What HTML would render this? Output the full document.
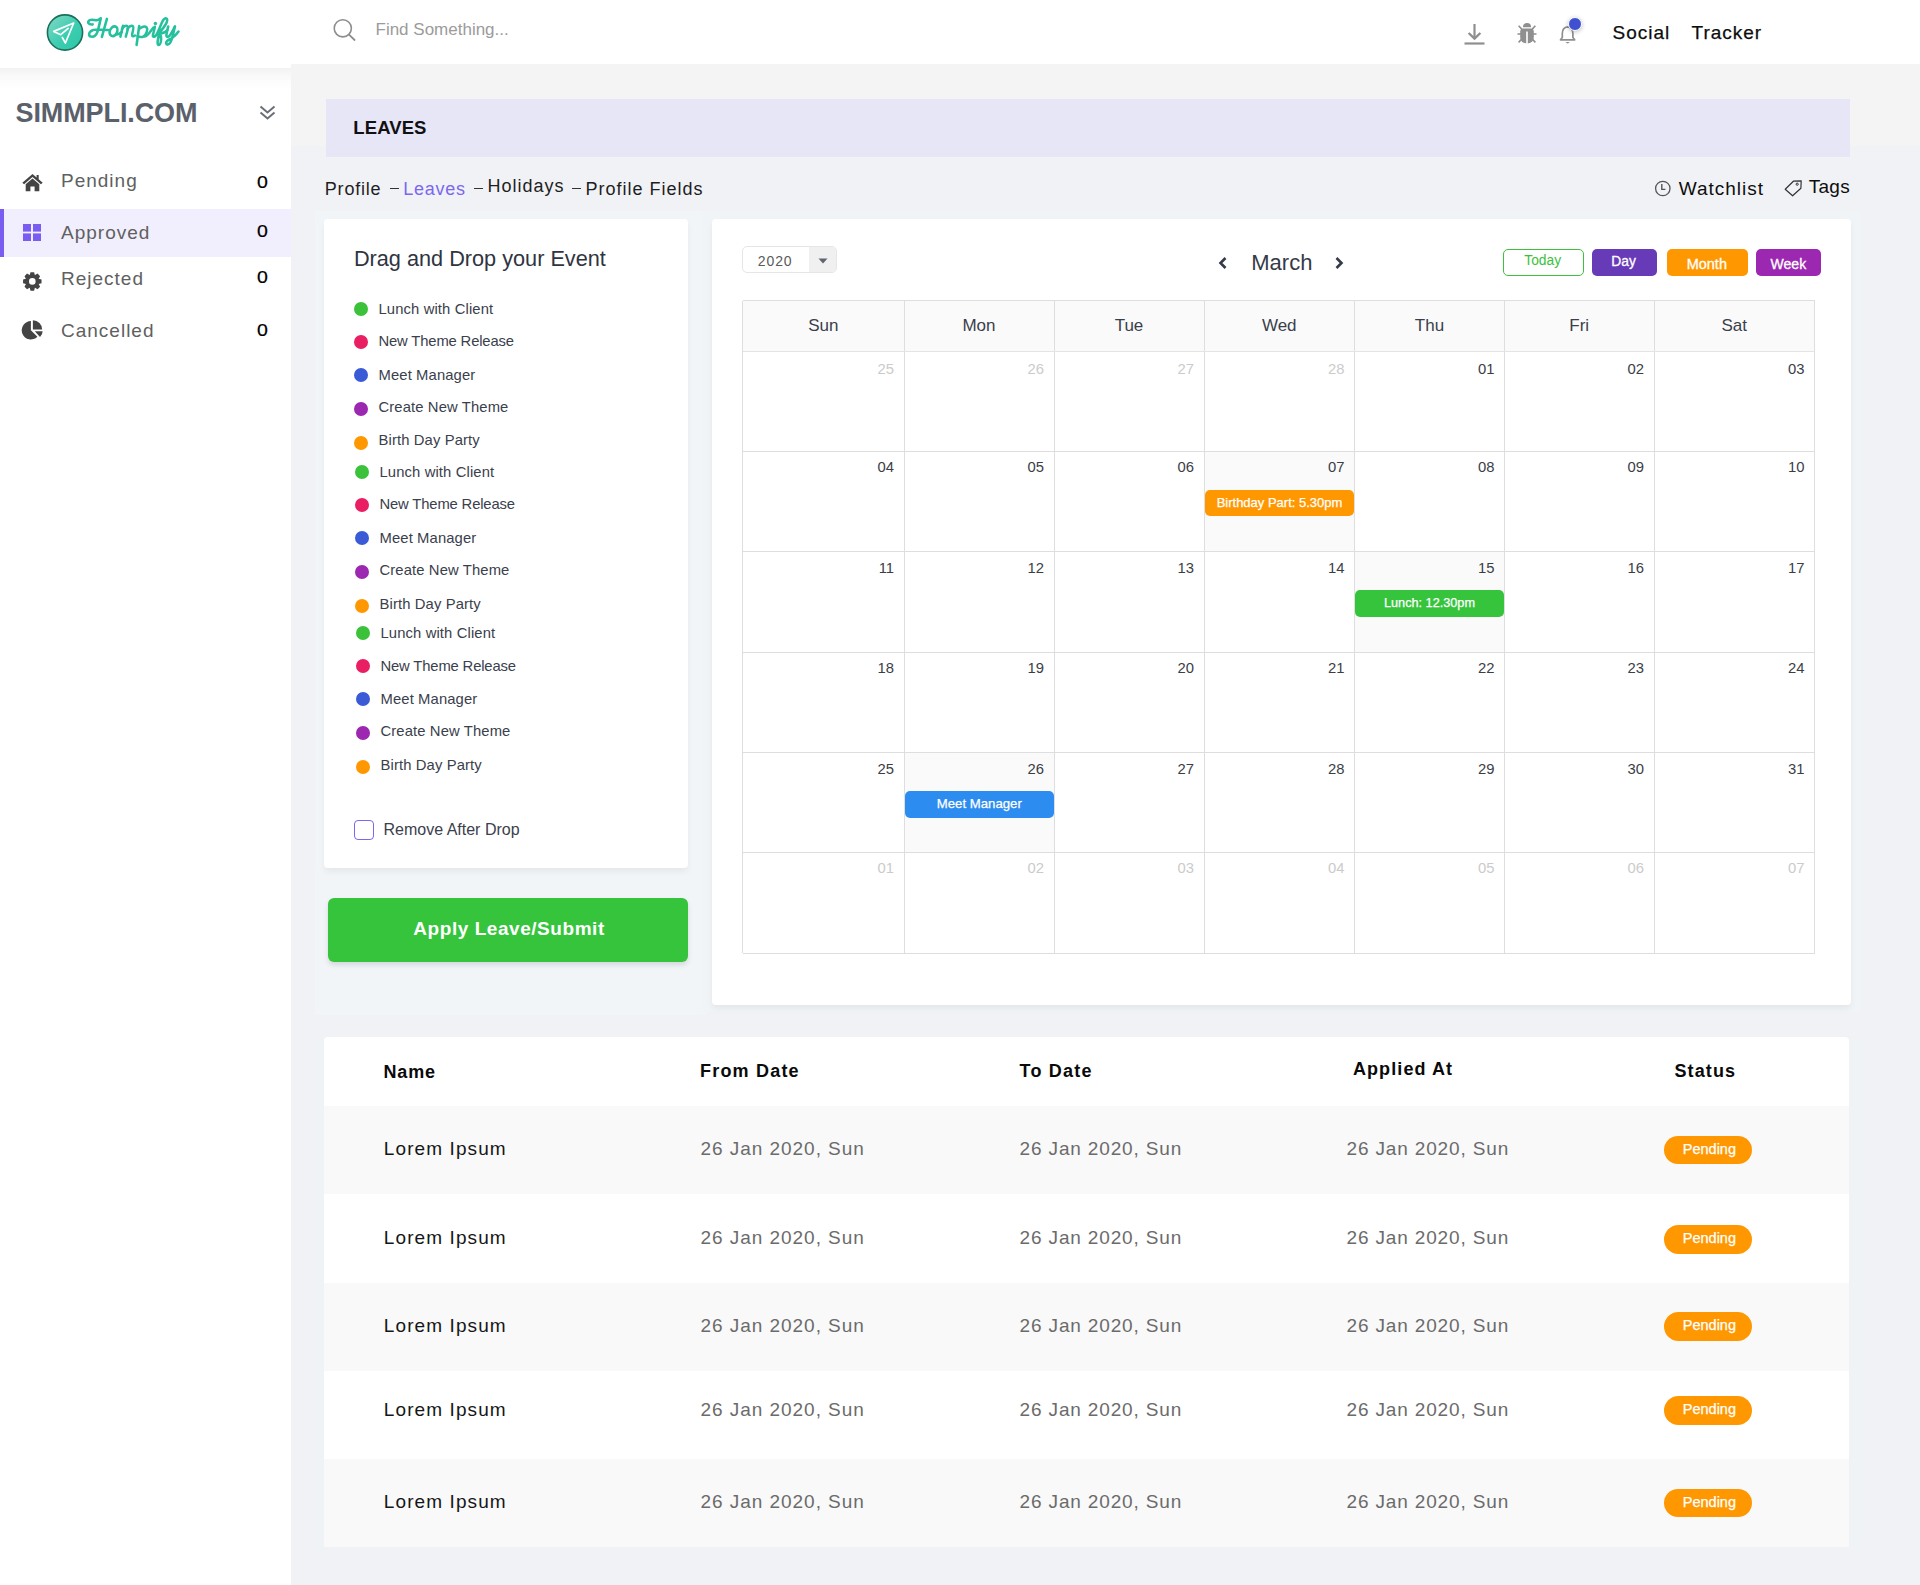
<!DOCTYPE html>
<html><head><meta charset="utf-8"><title>Leaves</title>
<style>
html,body{margin:0;padding:0;}
body{width:1920px;height:1585px;position:relative;overflow:hidden;background:#fff;font-family:"Liberation Sans", sans-serif;}
.t{position:absolute;white-space:nowrap;}
.r{position:absolute;}
</style></head><body>
<div class="r" style="left:291px;top:64px;width:1629px;height:82px;background:#f4f4f4;"></div>
<div class="r" style="left:291px;top:146px;width:1629px;height:1439px;background:#f1f2f6;"></div>
<div class="r" style="left:0px;top:0px;width:1920px;height:64px;background:#ffffff;"></div>
<div class="r" style="left:0px;top:64px;width:291px;height:1521px;background:#ffffff;"></div>
<div class="r" style="left:0px;top:68px;width:291px;height:22px;background:linear-gradient(#f2f2f2,#fafafa 40%,#ffffff);"></div>
<svg class="r" style="left:46px;top:13px" width="38" height="39" viewBox="0 0 38 39">
<defs><linearGradient id="lg" x1="0" y1="0" x2="1" y2="1"><stop offset="0" stop-color="#86d8c6"/><stop offset="0.55" stop-color="#3ccdb0"/><stop offset="1" stop-color="#2cc6a6"/></linearGradient></defs>
<circle cx="19" cy="19.5" r="17.6" fill="url(#lg)" stroke="#1b6f5a" stroke-width="1.6"/>
<path d="M16.3 24.5 L19.4 30 L27.7 10 L7.7 18.4 L14.7 21.7 L22.2 15.3" fill="none" stroke="#fff" stroke-width="1.7" stroke-linejoin="round" stroke-linecap="round"/>
</svg>
<svg class="r" style="left:84px;top:14px" width="100" height="38" viewBox="0 0 100 38">
<g fill="none" stroke="#25c09d" stroke-width="2.55" stroke-linecap="round" stroke-linejoin="round">
<path d="M8.6 10.4 C4.5 10.8 2.8 8.2 5.5 6.3 C8 4.6 11 6.6 13 6.2 C14.5 5.9 15.8 5 16.7 4.4"/>
<path d="M16.7 4.4 C15.5 10 14.5 15 13.2 18.5 C12 21.5 9.5 23 7 22.6 C4.5 22 4.6 19 6.8 17.3 C9 15.6 12 15.5 15 15.6 C18 15.7 21 16 24 16.1"/>
<path d="M22.9 4.9 L17.9 22.9"/>
<path d="M32.6 13.2 C29.5 10.8 25.6 14.5 25.6 18.6 C25.6 22 29 23.2 31.3 21 C33.4 19 34.4 15 32.6 13.2 Z"/>
<path d="M32.3 20.3 C34 20.6 36 19.6 37.8 18"/>
<path d="M39 11.7 L36.4 22.6"/>
<path d="M38 15 C39.5 12.5 42 11 43.4 12.2 C44.4 13 44 15 41.8 22.6"/>
<path d="M43.5 15 C45 12.5 47.5 11 48.9 12.2 C49.9 13 49.5 15 48.2 20 C47.7 22 48.8 23 51 21.5"/>
<path d="M55.2 12 L52.6 31"/>
<path d="M55.2 15 C57.5 12.5 61 11.8 62.6 13.4 C64 15 62.6 20.5 59.6 22.3 C57.5 23.4 55 23 53.5 22.2"/>
<path d="M60.5 22.5 C63.5 22.5 66.5 17 69.4 13.5"/>
<path d="M70.9 12.8 L68.9 21.2 C68.6 22.8 69.7 23.2 70.9 22.4 C71.6 21.9 72.2 21.2 72.6 20.6"/>
<path d="M72.6 20.6 C75 16 77 10 79 6.4 C80 4.6 81.5 3.8 82.5 4.6 C83.6 5.5 83.1 8 81.6 10.5 C80.1 13 78.2 15.5 76.2 17.6 C75.1 19.4 74.3 23 73.8 26.5 C73.4 29 73.6 31.1 74.7 31 C75.9 30.9 76.9 28.5 77.1 25.5 C77.2 23.5 76.7 21.2 76.3 19.6 C78.8 19.6 81.2 18.6 83.4 16.2"/>
<path d="M84.2 12.6 C83.4 15.5 82.7 18.5 82.4 20.8 C82.2 22.6 83.3 23.3 84.7 22.5 C86.9 21 89 16 90.9 12.6"/>
<path d="M90.9 12.6 C90 16.5 89 21 88 24.5 C87.1 27.5 85.6 30.5 83.6 30.6 C81.9 30.6 81.6 28.5 83.1 27 C84.6 25.5 86.6 24.8 88.1 24 C90.6 22.5 92.8 20 94.5 17.6"/>
</g><circle cx="71.4" cy="9.4" r="1.75" fill="#25c09d"/>
</svg>
<svg class="r" style="left:332px;top:18px" width="25" height="24" viewBox="0 0 25 24">
<circle cx="10.8" cy="10.3" r="8.6" fill="none" stroke="#8d8d8d" stroke-width="1.6"/>
<line x1="17" y1="16.6" x2="22.6" y2="22" stroke="#8d8d8d" stroke-width="1.8" stroke-linecap="round"/>
</svg>
<div class="t" style="left:375.5px;top:20.80px;font-size:17px;line-height:17px;color:#9b9b9b;font-weight:400;letter-spacing:0px;">Find Something...</div>
<svg class="r" style="left:1463px;top:22px" width="23" height="24" viewBox="0 0 23 24">
<path d="M11.5 2 V16" stroke="#8f8f8f" stroke-width="2.2"/>
<path d="M5.6 11 L11.5 16.6 L17.4 11" fill="none" stroke="#8f8f8f" stroke-width="2.4" stroke-linejoin="miter"/>
<path d="M1.5 21.5 H21.5" stroke="#8f8f8f" stroke-width="2.2"/>
</svg>
<svg class="r" style="left:1515px;top:22px" width="24" height="24" viewBox="0 0 24 24">
<path d="M7.9 5.2 A4.1 4.1 0 0 1 16.1 5.2 Z" fill="#8f8f8f"/>
<path d="M5.2 9 Q5.6 6.6 8 6.6 L16 6.6 Q18.4 6.6 18.8 9 L18.8 15.5 Q18.6 20.6 12.8 21.4 L12.8 9.4 L11.2 9.4 L11.2 21.4 Q5.4 20.6 5.2 15.5 Z" fill="#8f8f8f"/>
<path d="M2.5 12 H6 M18 12 H21.5 M3.6 3.8 L7 7.4 M20.4 3.8 L17 7.4 M3.6 20.4 L7 16.8 M20.4 20.4 L17 16.8" stroke="#8f8f8f" stroke-width="1.6"/>
</svg>
<svg class="r" style="left:1557px;top:23px" width="22" height="23" viewBox="0 0 22 23">
<path d="M3.5 16.8 L5.3 14.5 V10.5 Q5.3 4.3 10.6 3.8 Q15.9 4.3 15.9 10.5 V14.5 L17.7 16.8 Z" fill="none" stroke="#8f8f8f" stroke-width="1.7" stroke-linejoin="round"/>
<path d="M8.5 19 Q10.6 21.8 12.7 19 Z" fill="#8f8f8f"/>
</svg>
<div class="r" style="left:1567.5px;top:17px;width:14px;height:14px;border-radius:50%;background:#3f51d0;border:1.6px solid #fff;box-sizing:border-box;box-shadow:0 1px 4px rgba(0,0,0,0.25)"></div>
<div class="t" style="left:1612.5px;top:22.77px;font-size:19px;line-height:19px;color:#0d0d0d;font-weight:400;letter-spacing:1px;-webkit-text-stroke:0.25px #0d0d0d;">Social</div>
<div class="t" style="left:1691.5px;top:22.77px;font-size:19px;line-height:19px;color:#0d0d0d;font-weight:400;letter-spacing:1px;-webkit-text-stroke:0.25px #0d0d0d;">Tracker</div>
<div class="t" style="left:15.5px;top:99.83px;font-size:27px;line-height:27px;color:#5b616a;font-weight:700;letter-spacing:-0.1px;">SIMMPLI.COM</div>
<svg class="r" style="left:258px;top:103px" width="19" height="19" viewBox="0 0 19 19">
<path d="M2.5 3.5 L9.5 9.5 L16.5 3.5 M2.5 9.5 L9.5 15.5 L16.5 9.5" fill="none" stroke="#6a6f77" stroke-width="2"/>
</svg>
<div class="r" style="left:0px;top:209px;width:291px;height:48px;background:#f1effd;"></div>
<div class="r" style="left:0px;top:209px;width:4px;height:48px;background:#7b5cf0;"></div>
<div class="t" style="left:61px;top:170.97px;font-size:19px;line-height:19px;color:#606060;font-weight:400;letter-spacing:1px;">Pending</div>
<div class="t" style="left:257px;top:174.17px;font-size:17.3px;line-height:17.3px;color:#000;font-weight:400;letter-spacing:0px;transform:scaleX(1.13);transform-origin:0 0;-webkit-text-stroke:0.2px #000;">0</div>
<div class="t" style="left:61px;top:222.67px;font-size:19px;line-height:19px;color:#606060;font-weight:400;letter-spacing:1px;">Approved</div>
<div class="t" style="left:257px;top:223.27px;font-size:17.3px;line-height:17.3px;color:#000;font-weight:400;letter-spacing:0px;transform:scaleX(1.13);transform-origin:0 0;-webkit-text-stroke:0.2px #000;">0</div>
<div class="t" style="left:61px;top:268.97px;font-size:19px;line-height:19px;color:#606060;font-weight:400;letter-spacing:1px;">Rejected</div>
<div class="t" style="left:257px;top:268.97px;font-size:17.3px;line-height:17.3px;color:#000;font-weight:400;letter-spacing:0px;transform:scaleX(1.13);transform-origin:0 0;-webkit-text-stroke:0.2px #000;">0</div>
<div class="t" style="left:61px;top:321.37px;font-size:19px;line-height:19px;color:#606060;font-weight:400;letter-spacing:1px;">Cancelled</div>
<div class="t" style="left:257px;top:322.27px;font-size:17.3px;line-height:17.3px;color:#000;font-weight:400;letter-spacing:0px;transform:scaleX(1.13);transform-origin:0 0;-webkit-text-stroke:0.2px #000;">0</div>
<svg class="r" style="left:21px;top:172px" width="23" height="21" viewBox="0 0 23 21">
<path d="M11.5 2 L1.3 10.8 L3.1 12.2 L11.5 5 L19.9 12.2 L21.7 10.8 L17.7 7.3 V3 H15.6 V5.5 Z" fill="#444"/>
<path d="M4.7 12.2 L11.5 6.6 L18.3 12.2 V19.2 H13.6 V14.6 H9.4 V19.2 H4.7 Z" fill="#444"/>
</svg>
<svg class="r" style="left:23px;top:224px" width="18" height="17" viewBox="0 0 18 17">
<rect x="0" y="0" width="8" height="7.6" fill="#7b5cf0"/><rect x="10" y="0" width="8" height="7.6" fill="#7b5cf0"/>
<rect x="0" y="9.4" width="8" height="7.6" fill="#7b5cf0"/><rect x="10" y="9.4" width="8" height="7.6" fill="#7b5cf0"/>
</svg>
<svg class="r" style="left:21px;top:270px" width="23" height="23" viewBox="0 0 23 23">
<path fill="#444" fill-rule="evenodd" d="M8.72 5.00 L9.51 2.17 L13.09 2.17 L13.88 5.00 L14.00 5.05 L16.56 3.61 L19.09 6.14 L17.65 8.70 L17.70 8.82 L20.53 9.61 L20.53 13.19 L17.70 13.98 L17.65 14.10 L19.09 16.66 L16.56 19.19 L14.00 17.75 L13.88 17.80 L13.09 20.63 L9.51 20.63 L8.72 17.80 L8.60 17.75 L6.04 19.19 L3.51 16.66 L4.95 14.10 L4.90 13.98 L2.07 13.19 L2.07 9.61 L4.90 8.82 L4.95 8.70 L3.51 6.14 L6.04 3.61 L8.60 5.05 Z M14.60 11.40 A3.3 3.3 0 1 0 8.00 11.40 A3.3 3.3 0 1 0 14.60 11.40 Z"/>
</svg>
<svg class="r" style="left:21px;top:319px" width="24" height="24" viewBox="0 0 24 24">
<path d="M9.9 11.3 L9.9 2.1000000000000014 A9.2 9.2 0 1 0 16.41 17.81 Z" fill="#444"/><path d="M11.9 10.5 L11.9 1.1999999999999993 A9.3 9.3 0 0 1 21.200000000000003 10.5 Z" fill="#444"/><path d="M13.8 12.2 L21.6 12.2 A7.8 7.8 0 0 1 19.02 18.00 Z" fill="#444"/>
</svg>
<div class="r" style="left:326px;top:99px;width:1524px;height:58px;background:#e7e6f7;"></div>
<div class="t" style="left:353.3px;top:119.13px;font-size:18.5px;line-height:18.5px;color:#111;font-weight:700;letter-spacing:0.1px;">LEAVES</div>
<div class="t" style="left:324.8px;top:179.58px;font-size:18px;line-height:18px;color:#1e1e1e;font-weight:400;letter-spacing:0.8px;">Profile</div>
<div class="r" style="left:390.2px;top:188.0px;width:9px;height:1.2px;background:#333;"></div>
<div class="t" style="left:403.2px;top:179.58px;font-size:18px;line-height:18px;color:#7b68ee;font-weight:400;letter-spacing:0.75px;">Leaves</div>
<div class="r" style="left:473.7px;top:188.0px;width:9px;height:1.2px;background:#333;"></div>
<div class="t" style="left:487.5px;top:177.48px;font-size:18px;line-height:18px;color:#1e1e1e;font-weight:400;letter-spacing:1.0px;">Holidays</div>
<div class="r" style="left:571.9px;top:188.0px;width:9px;height:1.2px;background:#333;"></div>
<div class="t" style="left:585.5px;top:179.58px;font-size:18px;line-height:18px;color:#1e1e1e;font-weight:400;letter-spacing:1.0px;">Profile Fields</div>
<svg class="r" style="left:1654px;top:180px" width="18" height="17" viewBox="0 0 18 17">
<circle cx="8.8" cy="8.5" r="7.2" fill="none" stroke="#555" stroke-width="1.3"/>
<path d="M7.8 4 V9.4 H11.4" fill="none" stroke="#555" stroke-width="1.4"/>
</svg>
<div class="t" style="left:1678.7px;top:179.07px;font-size:19px;line-height:19px;color:#0d0d0d;font-weight:400;letter-spacing:1.0px;">Watchlist</div>
<svg class="r" style="left:1784px;top:179px" width="20" height="18" viewBox="0 0 20 18">
<path d="M1.2 10.3 L9.4 2.2 L17.2 1.8 L16.9 9.3 L8.6 16.8 Z" fill="none" stroke="#333" stroke-width="1.2" stroke-linejoin="round"/>
<circle cx="13.2" cy="5.2" r="1.1" fill="none" stroke="#333" stroke-width="1"/>
</svg>
<div class="t" style="left:1808.7px;top:177.27px;font-size:19px;line-height:19px;color:#0d0d0d;font-weight:400;letter-spacing:0.3px;">Tags</div>
<div class="r" style="left:315px;top:211px;width:391px;height:804px;background:#f2f5f8;"></div>
<div class="r" style="left:703px;top:211px;width:1158px;height:801px;background:#f1f4f7;"></div>
<div class="r" style="left:324px;top:219px;width:364px;height:649px;background:#fff;border-radius:4px;box-shadow:0 4px 6px rgba(0,0,0,0.05)"></div>
<div class="t" style="left:353.9px;top:247.65px;font-size:21.7px;line-height:21.7px;color:#2f3441;font-weight:400;letter-spacing:0px;">Drag and Drop your Event</div>
<div class="r" style="left:354px;top:302px;width:14px;height:14px;border-radius:50%;background:#3cc13b"></div>
<div class="t" style="left:378.5px;top:301.86px;font-size:14.8px;line-height:14.8px;color:#3a404c;font-weight:400;letter-spacing:0.12px;">Lunch with Client</div>
<div class="r" style="left:354px;top:334.7px;width:14px;height:14px;border-radius:50%;background:#e91e63"></div>
<div class="t" style="left:378.5px;top:334.26px;font-size:14.8px;line-height:14.8px;color:#3a404c;font-weight:400;letter-spacing:-0.15px;">New Theme Release</div>
<div class="r" style="left:354px;top:368px;width:14px;height:14px;border-radius:50%;background:#3b5bd6"></div>
<div class="t" style="left:378.5px;top:368.26px;font-size:14.8px;line-height:14.8px;color:#3a404c;font-weight:400;letter-spacing:0.12px;">Meet Manager</div>
<div class="r" style="left:354px;top:402px;width:14px;height:14px;border-radius:50%;background:#9c27b0"></div>
<div class="t" style="left:378.5px;top:399.96px;font-size:14.8px;line-height:14.8px;color:#3a404c;font-weight:400;letter-spacing:0.12px;">Create New Theme</div>
<div class="r" style="left:354px;top:436px;width:14px;height:14px;border-radius:50%;background:#ff9800"></div>
<div class="t" style="left:378.5px;top:433.26px;font-size:14.8px;line-height:14.8px;color:#3a404c;font-weight:400;letter-spacing:0.12px;">Birth Day Party</div>
<div class="r" style="left:355px;top:465px;width:14px;height:14px;border-radius:50%;background:#3cc13b"></div>
<div class="t" style="left:379.5px;top:464.96px;font-size:14.8px;line-height:14.8px;color:#3a404c;font-weight:400;letter-spacing:0.12px;">Lunch with Client</div>
<div class="r" style="left:355px;top:497.7px;width:14px;height:14px;border-radius:50%;background:#e91e63"></div>
<div class="t" style="left:379.5px;top:497.26px;font-size:14.8px;line-height:14.8px;color:#3a404c;font-weight:400;letter-spacing:-0.15px;">New Theme Release</div>
<div class="r" style="left:355px;top:531.3px;width:14px;height:14px;border-radius:50%;background:#3b5bd6"></div>
<div class="t" style="left:379.5px;top:531.26px;font-size:14.8px;line-height:14.8px;color:#3a404c;font-weight:400;letter-spacing:0.12px;">Meet Manager</div>
<div class="r" style="left:355px;top:565px;width:14px;height:14px;border-radius:50%;background:#9c27b0"></div>
<div class="t" style="left:379.5px;top:562.96px;font-size:14.8px;line-height:14.8px;color:#3a404c;font-weight:400;letter-spacing:0.12px;">Create New Theme</div>
<div class="r" style="left:355px;top:599px;width:14px;height:14px;border-radius:50%;background:#ff9800"></div>
<div class="t" style="left:379.5px;top:596.76px;font-size:14.8px;line-height:14.8px;color:#3a404c;font-weight:400;letter-spacing:0.12px;">Birth Day Party</div>
<div class="r" style="left:356px;top:626px;width:14px;height:14px;border-radius:50%;background:#3cc13b"></div>
<div class="t" style="left:380.5px;top:626.26px;font-size:14.8px;line-height:14.8px;color:#3a404c;font-weight:400;letter-spacing:0.12px;">Lunch with Client</div>
<div class="r" style="left:356px;top:658.7px;width:14px;height:14px;border-radius:50%;background:#e91e63"></div>
<div class="t" style="left:380.5px;top:658.56px;font-size:14.8px;line-height:14.8px;color:#3a404c;font-weight:400;letter-spacing:-0.15px;">New Theme Release</div>
<div class="r" style="left:356px;top:692px;width:14px;height:14px;border-radius:50%;background:#3b5bd6"></div>
<div class="t" style="left:380.5px;top:692.26px;font-size:14.8px;line-height:14.8px;color:#3a404c;font-weight:400;letter-spacing:0.12px;">Meet Manager</div>
<div class="r" style="left:356px;top:726px;width:14px;height:14px;border-radius:50%;background:#9c27b0"></div>
<div class="t" style="left:380.5px;top:723.66px;font-size:14.8px;line-height:14.8px;color:#3a404c;font-weight:400;letter-spacing:0.12px;">Create New Theme</div>
<div class="r" style="left:356px;top:760px;width:14px;height:14px;border-radius:50%;background:#ff9800"></div>
<div class="t" style="left:380.5px;top:757.76px;font-size:14.8px;line-height:14.8px;color:#3a404c;font-weight:400;letter-spacing:0.12px;">Birth Day Party</div>
<div class="r" style="left:354px;top:820px;width:20px;height:20px;border:1.5px solid #7b68ee;border-radius:4px;box-sizing:border-box;background:#fff"></div>
<div class="t" style="left:383.5px;top:821.92px;font-size:16px;line-height:16px;color:#3a404c;font-weight:400;letter-spacing:0px;">Remove After Drop</div>
<div class="r" style="left:328px;top:898px;width:360px;height:64px;background:#36c43d;border-radius:6px;box-shadow:0 3px 5px rgba(0,0,0,0.12)"></div>
<div class="t" style="left:413.3px;top:919.27px;font-size:19px;line-height:19px;color:#fff;font-weight:700;letter-spacing:0.55px;">Apply Leave/Submit</div>
<div class="r" style="left:712px;top:219px;width:1139px;height:786px;background:#fff;border-radius:4px;box-shadow:0 4px 6px rgba(0,0,0,0.05)"></div>
<div class="r" style="left:742px;top:246px;width:95px;height:27px;border:1px solid #e6e6e6;border-radius:5px;box-sizing:border-box;overflow:hidden;background:#fff"><div style="position:absolute;right:0;top:0;width:27px;height:27px;background:#f0f0f0"></div></div>
<svg class="r" style="left:818px;top:258px" width="10" height="6" viewBox="0 0 10 6"><path d="M0.5 0.5 L9.5 0.5 L5 5.5 Z" fill="#5f6470"/></svg>
<div class="t" style="left:757.8px;top:253.66px;font-size:14px;line-height:14px;color:#5a5a5a;font-weight:400;letter-spacing:0.9px;">2020</div>
<svg class="r" style="left:1216px;top:255px" width="13" height="16" viewBox="0 0 13 16"><path d="M9.5 3 L4.5 8 L9.5 13" fill="none" stroke="#343a46" stroke-width="2.6"/></svg>
<div class="t" style="left:1251.25px;top:251.61px;font-size:22px;line-height:22px;color:#343a46;font-weight:400;letter-spacing:0px;">March</div>
<svg class="r" style="left:1333px;top:255px" width="13" height="16" viewBox="0 0 13 16"><path d="M3.5 3 L8.5 8 L3.5 13" fill="none" stroke="#343a46" stroke-width="2.6"/></svg>
<div class="r" style="left:1503px;top:249px;width:81px;height:27px;border:1.5px solid #3cc13b;border-radius:5px;box-sizing:border-box;background:#fff"></div>
<div class="t" style="left:1502.7px;width:80px;text-align:center;top:254.08px;font-size:13.8px;line-height:13.8px;color:#3cc13b;font-weight:400;letter-spacing:0px;">Today</div>
<div class="r" style="left:1592px;top:249px;width:65px;height:27px;background:#673ab7;border-radius:5px"></div>
<div class="t" style="left:1591.6px;width:64px;text-align:center;top:254.68px;font-size:13.8px;line-height:13.8px;color:#fff;font-weight:400;letter-spacing:0px;-webkit-text-stroke:0.3px #fff;">Day</div>
<div class="r" style="left:1667px;top:249px;width:81px;height:27px;background:#ff9800;border-radius:5px"></div>
<div class="t" style="left:1666.8px;width:80px;text-align:center;top:256.60px;font-size:14.5px;line-height:14.5px;color:#fff;font-weight:400;letter-spacing:0px;-webkit-text-stroke:0.3px #fff;">Month</div>
<div class="r" style="left:1756px;top:249px;width:65px;height:27px;background:#9c27b0;border-radius:5px"></div>
<div class="t" style="left:1756.4px;width:64px;text-align:center;top:256.66px;font-size:14px;line-height:14px;color:#fff;font-weight:400;letter-spacing:0px;-webkit-text-stroke:0.3px #fff;">Week</div>
<div class="r" style="left:742.5px;top:300.5px;width:1072.0px;height:50.5px;background:#fafafa;"></div>
<div class="r" style="left:1204px;top:451.3px;width:150.5px;height:100.59999999999997px;background:#fafafa;"></div>
<div class="r" style="left:1354.5px;top:551.9px;width:150.0px;height:100.30000000000007px;background:#fafafa;"></div>
<div class="r" style="left:904px;top:752px;width:150px;height:100.79999999999995px;background:#fafafa;"></div>
<div class="r" style="left:742.0px;top:300.5px;width:1px;height:652.8px;background:#dedede;"></div>
<div class="r" style="left:903.5px;top:300.5px;width:1px;height:652.8px;background:#dedede;"></div>
<div class="r" style="left:1053.5px;top:300.5px;width:1px;height:652.8px;background:#dedede;"></div>
<div class="r" style="left:1203.5px;top:300.5px;width:1px;height:652.8px;background:#dedede;"></div>
<div class="r" style="left:1354.0px;top:300.5px;width:1px;height:652.8px;background:#dedede;"></div>
<div class="r" style="left:1504.0px;top:300.5px;width:1px;height:652.8px;background:#dedede;"></div>
<div class="r" style="left:1653.5px;top:300.5px;width:1px;height:652.8px;background:#dedede;"></div>
<div class="r" style="left:1814.0px;top:300.5px;width:1px;height:652.8px;background:#dedede;"></div>
<div class="r" style="left:742.5px;top:300.0px;width:1072.0px;height:1px;background:#dedede;"></div>
<div class="r" style="left:742.5px;top:350.5px;width:1072.0px;height:1px;background:#dedede;"></div>
<div class="r" style="left:742.5px;top:450.8px;width:1072.0px;height:1px;background:#dedede;"></div>
<div class="r" style="left:742.5px;top:551.4px;width:1072.0px;height:1px;background:#dedede;"></div>
<div class="r" style="left:742.5px;top:651.7px;width:1072.0px;height:1px;background:#dedede;"></div>
<div class="r" style="left:742.5px;top:751.5px;width:1072.0px;height:1px;background:#dedede;"></div>
<div class="r" style="left:742.5px;top:852.3px;width:1072.0px;height:1px;background:#dedede;"></div>
<div class="r" style="left:742.5px;top:952.8px;width:1072.0px;height:1px;background:#dedede;"></div>
<div class="r" style="left:742.5px;top:351.3px;width:1072.0px;height:1px;background:#e4e4e4;"></div>
<div class="t" style="left:763.25px;width:120px;text-align:center;top:317.30px;font-size:17px;line-height:17px;color:#3a3f4b;font-weight:400;letter-spacing:0px;">Sun</div>
<div class="t" style="left:919.0px;width:120px;text-align:center;top:317.30px;font-size:17px;line-height:17px;color:#3a3f4b;font-weight:400;letter-spacing:0px;">Mon</div>
<div class="t" style="left:1069.0px;width:120px;text-align:center;top:317.30px;font-size:17px;line-height:17px;color:#3a3f4b;font-weight:400;letter-spacing:0px;">Tue</div>
<div class="t" style="left:1219.25px;width:120px;text-align:center;top:317.30px;font-size:17px;line-height:17px;color:#3a3f4b;font-weight:400;letter-spacing:0px;">Wed</div>
<div class="t" style="left:1369.5px;width:120px;text-align:center;top:317.30px;font-size:17px;line-height:17px;color:#3a3f4b;font-weight:400;letter-spacing:0px;">Thu</div>
<div class="t" style="left:1519.25px;width:120px;text-align:center;top:317.30px;font-size:17px;line-height:17px;color:#3a3f4b;font-weight:400;letter-spacing:0px;">Fri</div>
<div class="t" style="left:1674.25px;width:120px;text-align:center;top:317.30px;font-size:17px;line-height:17px;color:#3a3f4b;font-weight:400;letter-spacing:0px;">Sat</div>
<div class="t" style="right:1026.0px;top:361.66px;font-size:14.8px;line-height:14.8px;color:#cbcbcb;font-weight:400;letter-spacing:0px;">25</div>
<div class="t" style="right:876.0px;top:361.66px;font-size:14.8px;line-height:14.8px;color:#cbcbcb;font-weight:400;letter-spacing:0px;">26</div>
<div class="t" style="right:726.0px;top:361.66px;font-size:14.8px;line-height:14.8px;color:#cbcbcb;font-weight:400;letter-spacing:0px;">27</div>
<div class="t" style="right:575.5px;top:361.66px;font-size:14.8px;line-height:14.8px;color:#cbcbcb;font-weight:400;letter-spacing:0px;">28</div>
<div class="t" style="right:425.5px;top:361.66px;font-size:14.8px;line-height:14.8px;color:#3b3e46;font-weight:400;letter-spacing:0px;">01</div>
<div class="t" style="right:276.0px;top:361.66px;font-size:14.8px;line-height:14.8px;color:#3b3e46;font-weight:400;letter-spacing:0px;">02</div>
<div class="t" style="right:115.5px;top:361.66px;font-size:14.8px;line-height:14.8px;color:#3b3e46;font-weight:400;letter-spacing:0px;">03</div>
<div class="t" style="right:1026.0px;top:460.36px;font-size:14.8px;line-height:14.8px;color:#3b3e46;font-weight:400;letter-spacing:0px;">04</div>
<div class="t" style="right:876.0px;top:460.36px;font-size:14.8px;line-height:14.8px;color:#3b3e46;font-weight:400;letter-spacing:0px;">05</div>
<div class="t" style="right:726.0px;top:460.36px;font-size:14.8px;line-height:14.8px;color:#3b3e46;font-weight:400;letter-spacing:0px;">06</div>
<div class="t" style="right:575.5px;top:460.36px;font-size:14.8px;line-height:14.8px;color:#3b3e46;font-weight:400;letter-spacing:0px;">07</div>
<div class="t" style="right:425.5px;top:460.36px;font-size:14.8px;line-height:14.8px;color:#3b3e46;font-weight:400;letter-spacing:0px;">08</div>
<div class="t" style="right:276.0px;top:460.36px;font-size:14.8px;line-height:14.8px;color:#3b3e46;font-weight:400;letter-spacing:0px;">09</div>
<div class="t" style="right:115.5px;top:460.36px;font-size:14.8px;line-height:14.8px;color:#3b3e46;font-weight:400;letter-spacing:0px;">10</div>
<div class="t" style="right:1026.0px;top:561.26px;font-size:14.8px;line-height:14.8px;color:#3b3e46;font-weight:400;letter-spacing:0px;">11</div>
<div class="t" style="right:876.0px;top:561.26px;font-size:14.8px;line-height:14.8px;color:#3b3e46;font-weight:400;letter-spacing:0px;">12</div>
<div class="t" style="right:726.0px;top:561.26px;font-size:14.8px;line-height:14.8px;color:#3b3e46;font-weight:400;letter-spacing:0px;">13</div>
<div class="t" style="right:575.5px;top:561.26px;font-size:14.8px;line-height:14.8px;color:#3b3e46;font-weight:400;letter-spacing:0px;">14</div>
<div class="t" style="right:425.5px;top:561.26px;font-size:14.8px;line-height:14.8px;color:#3b3e46;font-weight:400;letter-spacing:0px;">15</div>
<div class="t" style="right:276.0px;top:561.26px;font-size:14.8px;line-height:14.8px;color:#3b3e46;font-weight:400;letter-spacing:0px;">16</div>
<div class="t" style="right:115.5px;top:561.26px;font-size:14.8px;line-height:14.8px;color:#3b3e46;font-weight:400;letter-spacing:0px;">17</div>
<div class="t" style="right:1026.0px;top:661.26px;font-size:14.8px;line-height:14.8px;color:#3b3e46;font-weight:400;letter-spacing:0px;">18</div>
<div class="t" style="right:876.0px;top:661.26px;font-size:14.8px;line-height:14.8px;color:#3b3e46;font-weight:400;letter-spacing:0px;">19</div>
<div class="t" style="right:726.0px;top:661.26px;font-size:14.8px;line-height:14.8px;color:#3b3e46;font-weight:400;letter-spacing:0px;">20</div>
<div class="t" style="right:575.5px;top:661.26px;font-size:14.8px;line-height:14.8px;color:#3b3e46;font-weight:400;letter-spacing:0px;">21</div>
<div class="t" style="right:425.5px;top:661.26px;font-size:14.8px;line-height:14.8px;color:#3b3e46;font-weight:400;letter-spacing:0px;">22</div>
<div class="t" style="right:276.0px;top:661.26px;font-size:14.8px;line-height:14.8px;color:#3b3e46;font-weight:400;letter-spacing:0px;">23</div>
<div class="t" style="right:115.5px;top:661.26px;font-size:14.8px;line-height:14.8px;color:#3b3e46;font-weight:400;letter-spacing:0px;">24</div>
<div class="t" style="right:1026.0px;top:761.66px;font-size:14.8px;line-height:14.8px;color:#3b3e46;font-weight:400;letter-spacing:0px;">25</div>
<div class="t" style="right:876.0px;top:761.66px;font-size:14.8px;line-height:14.8px;color:#3b3e46;font-weight:400;letter-spacing:0px;">26</div>
<div class="t" style="right:726.0px;top:761.66px;font-size:14.8px;line-height:14.8px;color:#3b3e46;font-weight:400;letter-spacing:0px;">27</div>
<div class="t" style="right:575.5px;top:761.66px;font-size:14.8px;line-height:14.8px;color:#3b3e46;font-weight:400;letter-spacing:0px;">28</div>
<div class="t" style="right:425.5px;top:761.66px;font-size:14.8px;line-height:14.8px;color:#3b3e46;font-weight:400;letter-spacing:0px;">29</div>
<div class="t" style="right:276.0px;top:761.66px;font-size:14.8px;line-height:14.8px;color:#3b3e46;font-weight:400;letter-spacing:0px;">30</div>
<div class="t" style="right:115.5px;top:761.66px;font-size:14.8px;line-height:14.8px;color:#3b3e46;font-weight:400;letter-spacing:0px;">31</div>
<div class="t" style="right:1026.0px;top:860.96px;font-size:14.8px;line-height:14.8px;color:#cbcbcb;font-weight:400;letter-spacing:0px;">01</div>
<div class="t" style="right:876.0px;top:860.96px;font-size:14.8px;line-height:14.8px;color:#cbcbcb;font-weight:400;letter-spacing:0px;">02</div>
<div class="t" style="right:726.0px;top:860.96px;font-size:14.8px;line-height:14.8px;color:#cbcbcb;font-weight:400;letter-spacing:0px;">03</div>
<div class="t" style="right:575.5px;top:860.96px;font-size:14.8px;line-height:14.8px;color:#cbcbcb;font-weight:400;letter-spacing:0px;">04</div>
<div class="t" style="right:425.5px;top:860.96px;font-size:14.8px;line-height:14.8px;color:#cbcbcb;font-weight:400;letter-spacing:0px;">05</div>
<div class="t" style="right:276.0px;top:860.96px;font-size:14.8px;line-height:14.8px;color:#cbcbcb;font-weight:400;letter-spacing:0px;">06</div>
<div class="t" style="right:115.5px;top:860.96px;font-size:14.8px;line-height:14.8px;color:#cbcbcb;font-weight:400;letter-spacing:0px;">07</div>
<div class="r" style="left:1205px;top:490px;width:149px;height:26px;background:#ff9800;border-radius:5px"></div>
<div class="t" style="left:1205.0px;width:149px;text-align:center;top:495.97px;font-size:13px;line-height:13px;color:#fff;font-weight:400;letter-spacing:0px;-webkit-text-stroke:0.25px #fff;">Birthday Part: 5.30pm</div>
<div class="r" style="left:1355px;top:590px;width:149px;height:27px;background:#36c43d;border-radius:5px"></div>
<div class="t" style="left:1355.0px;width:149px;text-align:center;top:596.81px;font-size:12.7px;line-height:12.7px;color:#fff;font-weight:400;letter-spacing:0px;-webkit-text-stroke:0.25px #fff;">Lunch: 12.30pm</div>
<div class="r" style="left:904.5px;top:791px;width:149px;height:26.5px;background:#2d8cf0;border-radius:5px"></div>
<div class="t" style="left:904.8px;width:149px;text-align:center;top:797.25px;font-size:13.2px;line-height:13.2px;color:#fff;font-weight:400;letter-spacing:0px;-webkit-text-stroke:0.25px #fff;">Meet Manager</div>
<div class="r" style="left:315px;top:1037px;width:1547px;height:510px;background:#eff3f6;opacity:0.6"></div>
<div class="r" style="left:324px;top:1037px;width:1525px;height:510px;background:#fff;border-radius:4px 4px 0 0"></div>
<div class="r" style="left:324px;top:1105.8px;width:1525px;height:88.0px;background:#f9f9fa;"></div>
<div class="r" style="left:324px;top:1193.8px;width:1525px;height:89.20000000000005px;background:#ffffff;"></div>
<div class="r" style="left:324px;top:1283px;width:1525px;height:87.79999999999995px;background:#f9f9fa;"></div>
<div class="r" style="left:324px;top:1370.8px;width:1525px;height:88.60000000000014px;background:#ffffff;"></div>
<div class="r" style="left:324px;top:1459.4px;width:1525px;height:87.39999999999986px;background:#f9f9fa;"></div>
<div class="t" style="left:383.4px;top:1062.88px;font-size:18px;line-height:18px;color:#0a0a0a;font-weight:700;letter-spacing:0.9px;">Name</div>
<div class="t" style="left:700px;top:1061.68px;font-size:18px;line-height:18px;color:#0a0a0a;font-weight:700;letter-spacing:1.2px;">From Date</div>
<div class="t" style="left:1019.6px;top:1061.68px;font-size:18px;line-height:18px;color:#0a0a0a;font-weight:700;letter-spacing:1.2px;">To Date</div>
<div class="t" style="left:1352.9px;top:1059.79px;font-size:18px;line-height:18px;color:#0a0a0a;font-weight:700;letter-spacing:1.1px;">Applied At</div>
<div class="t" style="left:1674.5px;top:1061.88px;font-size:18px;line-height:18px;color:#0a0a0a;font-weight:700;letter-spacing:1.1px;">Status</div>
<div class="t" style="left:383.8px;top:1138.87px;font-size:19px;line-height:19px;color:#161616;font-weight:400;letter-spacing:1.1px;">Lorem Ipsum</div>
<div class="t" style="left:700.6px;top:1138.87px;font-size:19px;line-height:19px;color:#6b6b6b;font-weight:400;letter-spacing:0.95px;">26 Jan 2020, Sun</div>
<div class="t" style="left:1019.6px;top:1138.87px;font-size:19px;line-height:19px;color:#6b6b6b;font-weight:400;letter-spacing:0.85px;">26 Jan 2020, Sun</div>
<div class="t" style="left:1346.5px;top:1138.87px;font-size:19px;line-height:19px;color:#6b6b6b;font-weight:400;letter-spacing:0.85px;">26 Jan 2020, Sun</div>
<div class="r" style="left:1664.2px;top:1135.9px;width:87.6px;height:28.6px;background:#ff9800;border-radius:15px"></div>
<div class="t" style="left:1665.6000000000001px;width:87.6px;text-align:center;top:1142.20px;font-size:14.5px;line-height:14.5px;color:#fff;font-weight:400;letter-spacing:0px;-webkit-text-stroke:0.25px #fff;">Pending</div>
<div class="t" style="left:383.8px;top:1227.77px;font-size:19px;line-height:19px;color:#161616;font-weight:400;letter-spacing:1.1px;">Lorem Ipsum</div>
<div class="t" style="left:700.6px;top:1227.77px;font-size:19px;line-height:19px;color:#6b6b6b;font-weight:400;letter-spacing:0.95px;">26 Jan 2020, Sun</div>
<div class="t" style="left:1019.6px;top:1227.77px;font-size:19px;line-height:19px;color:#6b6b6b;font-weight:400;letter-spacing:0.85px;">26 Jan 2020, Sun</div>
<div class="t" style="left:1346.5px;top:1227.77px;font-size:19px;line-height:19px;color:#6b6b6b;font-weight:400;letter-spacing:0.85px;">26 Jan 2020, Sun</div>
<div class="r" style="left:1664.2px;top:1225px;width:87.6px;height:28.6px;background:#ff9800;border-radius:15px"></div>
<div class="t" style="left:1665.6000000000001px;width:87.6px;text-align:center;top:1231.30px;font-size:14.5px;line-height:14.5px;color:#fff;font-weight:400;letter-spacing:0px;-webkit-text-stroke:0.25px #fff;">Pending</div>
<div class="t" style="left:383.8px;top:1315.87px;font-size:19px;line-height:19px;color:#161616;font-weight:400;letter-spacing:1.1px;">Lorem Ipsum</div>
<div class="t" style="left:700.6px;top:1315.87px;font-size:19px;line-height:19px;color:#6b6b6b;font-weight:400;letter-spacing:0.95px;">26 Jan 2020, Sun</div>
<div class="t" style="left:1019.6px;top:1315.87px;font-size:19px;line-height:19px;color:#6b6b6b;font-weight:400;letter-spacing:0.85px;">26 Jan 2020, Sun</div>
<div class="t" style="left:1346.5px;top:1315.87px;font-size:19px;line-height:19px;color:#6b6b6b;font-weight:400;letter-spacing:0.85px;">26 Jan 2020, Sun</div>
<div class="r" style="left:1664.2px;top:1312px;width:87.6px;height:28.6px;background:#ff9800;border-radius:15px"></div>
<div class="t" style="left:1665.6000000000001px;width:87.6px;text-align:center;top:1318.30px;font-size:14.5px;line-height:14.5px;color:#fff;font-weight:400;letter-spacing:0px;-webkit-text-stroke:0.25px #fff;">Pending</div>
<div class="t" style="left:383.8px;top:1399.67px;font-size:19px;line-height:19px;color:#161616;font-weight:400;letter-spacing:1.1px;">Lorem Ipsum</div>
<div class="t" style="left:700.6px;top:1399.67px;font-size:19px;line-height:19px;color:#6b6b6b;font-weight:400;letter-spacing:0.95px;">26 Jan 2020, Sun</div>
<div class="t" style="left:1019.6px;top:1399.67px;font-size:19px;line-height:19px;color:#6b6b6b;font-weight:400;letter-spacing:0.85px;">26 Jan 2020, Sun</div>
<div class="t" style="left:1346.5px;top:1399.67px;font-size:19px;line-height:19px;color:#6b6b6b;font-weight:400;letter-spacing:0.85px;">26 Jan 2020, Sun</div>
<div class="r" style="left:1664.2px;top:1396px;width:87.6px;height:28.6px;background:#ff9800;border-radius:15px"></div>
<div class="t" style="left:1665.6000000000001px;width:87.6px;text-align:center;top:1402.30px;font-size:14.5px;line-height:14.5px;color:#fff;font-weight:400;letter-spacing:0px;-webkit-text-stroke:0.25px #fff;">Pending</div>
<div class="t" style="left:383.8px;top:1491.87px;font-size:19px;line-height:19px;color:#161616;font-weight:400;letter-spacing:1.1px;">Lorem Ipsum</div>
<div class="t" style="left:700.6px;top:1491.87px;font-size:19px;line-height:19px;color:#6b6b6b;font-weight:400;letter-spacing:0.95px;">26 Jan 2020, Sun</div>
<div class="t" style="left:1019.6px;top:1491.87px;font-size:19px;line-height:19px;color:#6b6b6b;font-weight:400;letter-spacing:0.85px;">26 Jan 2020, Sun</div>
<div class="t" style="left:1346.5px;top:1491.87px;font-size:19px;line-height:19px;color:#6b6b6b;font-weight:400;letter-spacing:0.85px;">26 Jan 2020, Sun</div>
<div class="r" style="left:1664.2px;top:1488.5px;width:87.6px;height:28.6px;background:#ff9800;border-radius:15px"></div>
<div class="t" style="left:1665.6000000000001px;width:87.6px;text-align:center;top:1494.80px;font-size:14.5px;line-height:14.5px;color:#fff;font-weight:400;letter-spacing:0px;-webkit-text-stroke:0.25px #fff;">Pending</div>
</body></html>
